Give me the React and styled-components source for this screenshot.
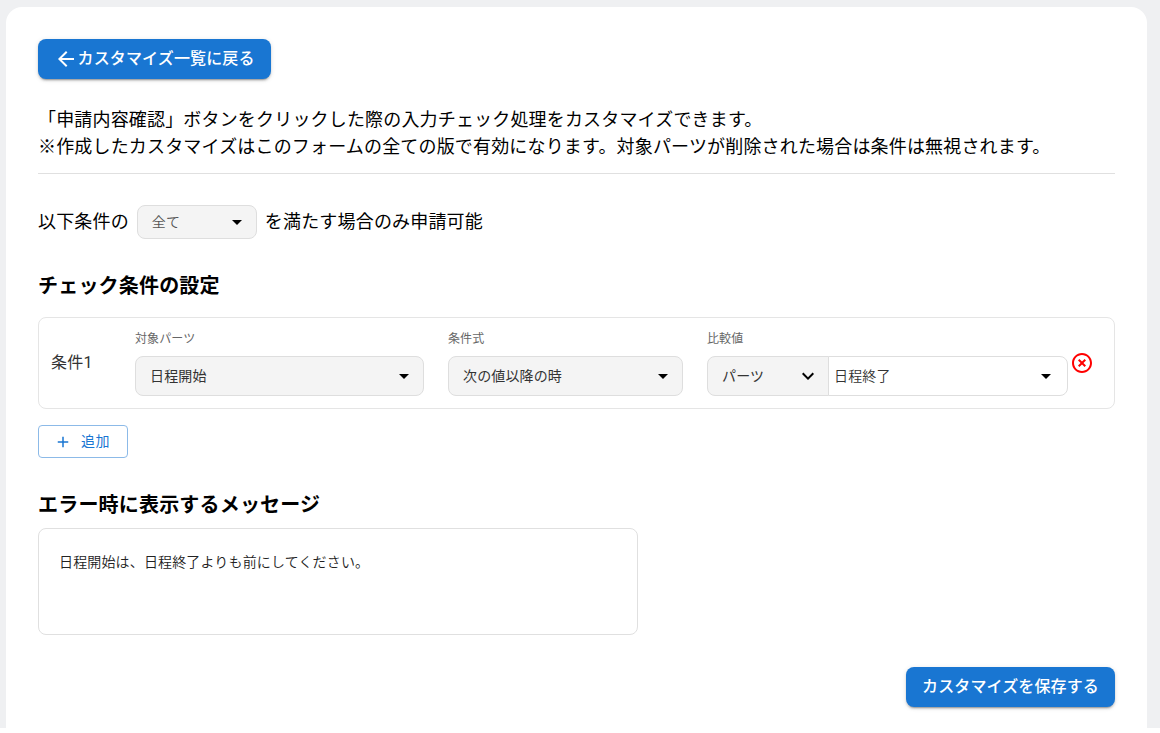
import React from 'react';
import styled, { createGlobalStyle } from 'styled-components';

const ICONS = {
  back: 'M20 11H7.83l5.59-5.59L12 4l-8 8 8 8 1.41-1.41L7.83 13H20v-2z',
  caret: 'm7 10 5 5 5-5z',
  chevron: 'M16.59 8.59 12 13.17 7.41 8.59 6 10l6 6 6-6z',
  add: 'M19 13h-6v6h-2v-6H5v-2h6V5h2v6h6v2z',
  remove:
    'M14.59 8 12 10.59 9.41 8 8 9.41 10.59 12 8 14.59 9.41 16 12 13.41 14.59 16 16 14.59 13.41 12 16 9.41 14.59 8zM12 2C6.47 2 2 6.47 2 12s4.47 10 10 10 10-4.47 10-10S17.53 2 12 2zm0 18c-4.41 0-8-3.59-8-8s3.59-8 8-8 8 3.59 8 8-3.59 8-8 8z',
};

const Icon = ({ name, size = 24 }) => (
  <Svg viewBox="0 0 24 24" $size={size} aria-hidden="true">
    <path d={ICONS[name]} />
  </Svg>
);

const Select = ({ value, icon = 'caret', ...rest }) => (
  <SelectBox type="button" {...rest}>
    <span>{value}</span>
    <Icon name={icon} />
  </SelectBox>
);

const App = () => (
  <>
    <GlobalStyle />
    <Background>
      <Card>
        <PrimaryButton type="button">
          <Icon name="back" />
          カスタマイズ一覧に戻る
        </PrimaryButton>
        <Intro>
          「申請内容確認」ボタンをクリックした際の入力チェック処理をカスタマイズできます。
          <br />
          ※作成したカスタマイズはこのフォームの全ての版で有効になります。対象パーツが削除された場合は条件は無視されます。
        </Intro>
        <MatchRow>
          以下条件の
          <Select value="全て" $width={120} $height={34} $muted />
          を満たす場合のみ申請可能
        </MatchRow>
        <Title>チェック条件の設定</Title>
        <Condition>
          <ConditionName>条件1</ConditionName>
          <Field $width={289}>
            <Label>対象パーツ</Label>
            <Select value="日程開始" />
          </Field>
          <Field $width={235}>
            <Label>条件式</Label>
            <Select value="次の値以降の時" />
          </Field>
          <Field $width={361}>
            <Label>比較値</Label>
            <Joined>
              <Select value="パーツ" icon="chevron" $width={122} $side="left" />
              <Select value="日程終了" $width={240} $side="right" />
            </Joined>
          </Field>
          <RemoveButton type="button" aria-label="削除">
            <Icon name="remove" />
          </RemoveButton>
        </Condition>
        <AddButton type="button">
          <Icon name="add" size={18} />
          <span>追加</span>
        </AddButton>
        <Title>エラー時に表示するメッセージ</Title>
        <Message defaultValue="日程開始は、日程終了よりも前にしてください。" />
        <Footer>
          <PrimaryButton type="button">カスタマイズを保存する</PrimaryButton>
        </Footer>
      </Card>
    </Background>
  </>
);

export default App;

const GlobalStyle = createGlobalStyle`
  * {
    box-sizing: border-box;
  }
  body {
    margin: 0;
    background: #fff;
    color: #000;
    overflow: hidden;
  }
  body, button, textarea {
    font-family: Roboto, 'Noto Sans CJK JP', sans-serif;
    font-weight: 400;
  }
`;

const Svg = styled.svg`
  display: block;
  flex-shrink: 0;
  width: ${({ $size }) => $size}px;
  height: ${({ $size }) => $size}px;
  fill: currentColor;
`;

const Background = styled.div`
  height: 728px;
  padding: 7px 13px 0 6px;
  background: #eff0f2;
`;

const Card = styled.main`
  height: 721px;
  padding: 32px 32px 0;
  border-radius: 16px 16px 0 0;
  background: #fff;
`;

const PrimaryButton = styled.button`
  display: flex;
  align-items: center;
  height: 40px;
  padding: 0 16px 0 15.6px;
  border: 0;
  border-radius: 8px;
  background: #1976d2;
  color: #fff;
  font-size: 16px;
  font-weight: 500;
  line-height: 24px;
  letter-spacing: 0.13px;
  box-shadow: 0 3px 1px -2px rgba(0, 0, 0, 0.2), 0 2px 2px rgba(0, 0, 0, 0.14),
    0 1px 5px rgba(0, 0, 0, 0.12);
`;

const Intro = styled.p`
  margin: 27px 0 0;
  padding-bottom: 13px;
  border-bottom: 1px solid #e0e0e0;
  font-size: 18px;
  line-height: 27px;
  letter-spacing: 0.17px;
  white-space: nowrap;
`;

const MatchRow = styled.div`
  display: flex;
  align-items: center;
  gap: 8px;
  margin-top: 31px;
  font-size: 18px;
  line-height: 34px;
  letter-spacing: 0.17px;
`;

const Title = styled.h2`
  margin: 31px 0 0;
  font-size: 20px;
  font-weight: 700;
  line-height: 32px;
  letter-spacing: 0.19px;
`;

const Condition = styled.section`
  display: flex;
  height: 92px;
  margin-top: 15px;
  padding: 12px 12px 11px;
  border: 1px solid #e5e5e5;
  border-radius: 8px;
`;

const ConditionName = styled.div`
  width: 84px;
  padding-top: 21px;
  color: #333;
  font-size: 16px;
  line-height: 24px;
  letter-spacing: 0.2px;
`;

const Field = styled.div`
  width: ${({ $width }) => $width}px;
  & + & {
    margin-left: 24px;
  }
`;

const Label = styled.div`
  margin-bottom: 7px;
  color: #666;
  font-size: 12px;
  line-height: 19px;
  letter-spacing: 0.1px;
`;

const Joined = styled.div`
  display: flex;
`;

const SelectBox = styled.button`
  display: flex;
  align-items: center;
  justify-content: space-between;
  width: ${({ $width }) => ($width ? `${$width}px` : '100%')};
  height: ${({ $height }) => $height || 40}px;
  padding: 0 7px 0 ${({ $side }) => ($side === 'right' ? 5 : 14)}px;
  border: 1px solid #dedede;
  border-radius: 8px;
  background: #f4f4f4;
  color: #333;
  font-size: 14px;
  line-height: 20px;
  letter-spacing: 0.13px;

  ${({ $muted }) => $muted && 'color: #555; font-weight: 350;'}
  ${({ $side }) =>
    $side === 'left' &&
    `
    padding-right: 8px;
    border-radius: 8px 0 0 8px;
  `}
  ${({ $side }) =>
    $side === 'right' &&
    `
    margin-left: -1px;
    padding-right: 9px;
    border-radius: 0 8px 8px 0;
    background: #fff;
    font-weight: 350;
  `}

  svg {
    color: #000;
  }
`;

const RemoveButton = styled.button`
  align-self: flex-start;
  margin: 21px 0 0 2px;
  padding: 0;
  border: 0;
  background: none;
  color: #f00;
`;

const AddButton = styled.button`
  display: flex;
  align-items: center;
  gap: 9px;
  width: 90px;
  height: 33px;
  margin-top: 16px;
  padding: 0 15px;
  border: 1px solid #8cbae8;
  border-radius: 4px;
  background: #fff;
  color: #1976d2;
  font-size: 14px;
  line-height: 23px;
  letter-spacing: 0.4px;
`;

const Message = styled.textarea`
  display: block;
  width: 600px;
  height: 107px;
  margin-top: 7px;
  padding: 22px 20px;
  border: 1px solid #e0e0e0;
  border-radius: 8px;
  color: #222;
  font-size: 14px;
  font-weight: 350;
  line-height: 22px;
  letter-spacing: 0.15px;
  resize: none;
`;

const Footer = styled.footer`
  display: flex;
  justify-content: flex-end;
  margin-top: 32px;
`;
